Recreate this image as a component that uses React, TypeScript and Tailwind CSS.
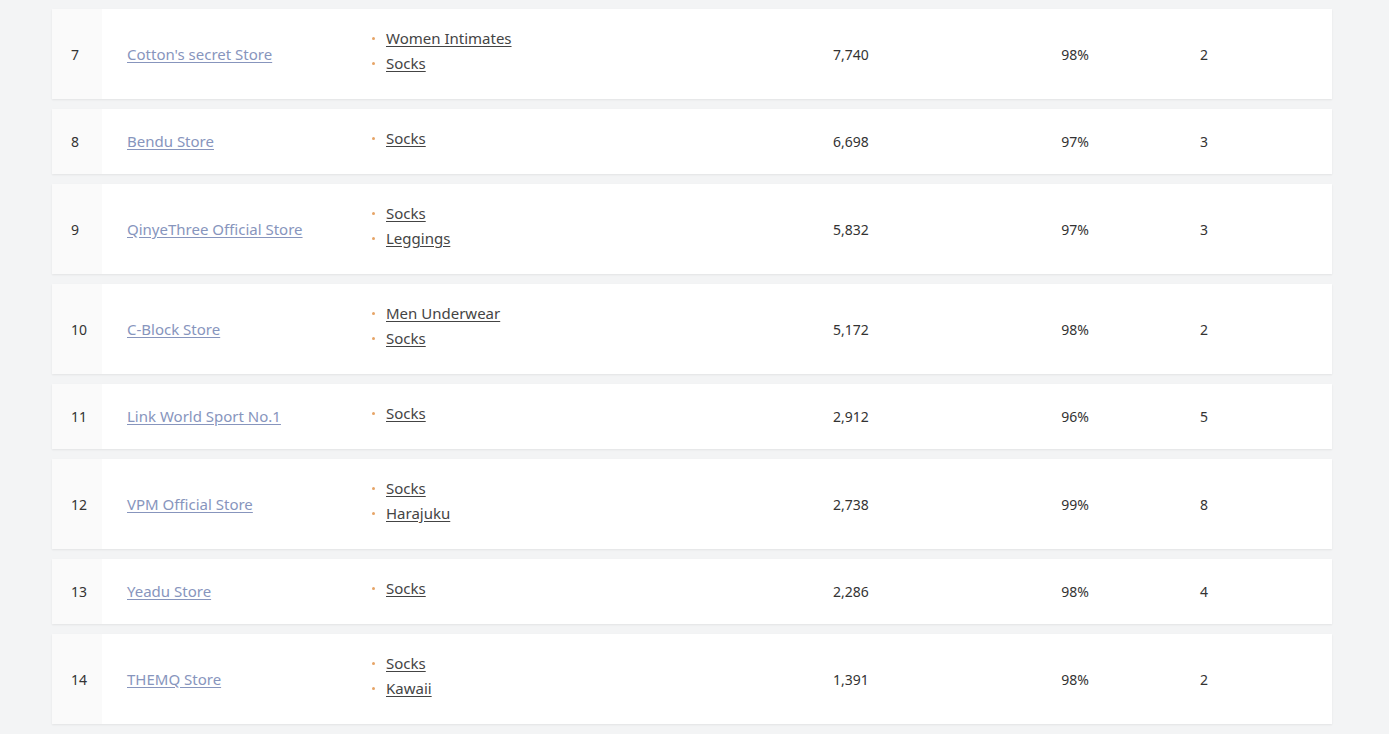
const rows = [
  { rank: 7, store: "Cotton's secret Store", cats: ["Women Intimates", "Socks"], orders: "7,740", rating: "98%", years: 2 },
  { rank: 8, store: "Bendu Store", cats: ["Socks"], orders: "6,698", rating: "97%", years: 3 },
  { rank: 9, store: "QinyeThree Official Store", cats: ["Socks", "Leggings"], orders: "5,832", rating: "97%", years: 3 },
  { rank: 10, store: "C-Block Store", cats: ["Men Underwear", "Socks"], orders: "5,172", rating: "98%", years: 2 },
  { rank: 11, store: "Link World Sport No.1", cats: ["Socks"], orders: "2,912", rating: "96%", years: 5 },
  { rank: 12, store: "VPM Official Store", cats: ["Socks", "Harajuku"], orders: "2,738", rating: "99%", years: 8 },
  { rank: 13, store: "Yeadu Store", cats: ["Socks"], orders: "2,286", rating: "98%", years: 4 },
  { rank: 14, store: "THEMQ Store", cats: ["Socks", "Kawaii"], orders: "1,391", rating: "98%", years: 2 },
];

const StoreRow = ({ row }: { row: (typeof rows)[number] }) => (
  <div className="grid grid-cols-[50px_262px_350px_274px_174px_1fr] items-center bg-white text-[14px] leading-[25px] text-[#333] shadow-[0_1px_2px_rgba(0,0,0,0.07)]">
    <div className="flex h-full items-center bg-[#fafafa] pl-[19px]">{row.rank}</div>
    <div className="pl-[25px] text-[15px]">
      <a href="#" className="text-[#8795bd] underline underline-offset-2">
        {row.store}
      </a>
    </div>
    <ul className="pt-[17px] pb-[23px] text-[15px]">
      {row.cats.map((c) => (
        <li key={c} className="flex items-center">
          <span className="ml-[8px] mr-[11px] h-[3px] w-[3px] rounded-full bg-[#e6a467]" />
          <a href="#" className="text-[#444] underline underline-offset-2">
            {c}
          </a>
        </li>
      ))}
    </ul>
    <div className="text-center">{row.orders}</div>
    <div className="text-center">{row.rating}</div>
    <div className="pl-[38px]">{row.years}</div>
  </div>
);

export default function App() {
  return (
    <div
      className="min-h-screen bg-[#f3f4f5] pl-[52px]"
      style={{ fontFamily: '"Noto Sans", "Open Sans", sans-serif' }}
    >
      <div className="-mt-px flex w-[1280px] flex-col gap-[10px]">
        <div className="h-0 shadow-[0_1px_2px_rgba(0,0,0,0.07)]" />
        {rows.map((r) => (
          <StoreRow key={r.rank} row={r} />
        ))}
      </div>
    </div>
  );
}
